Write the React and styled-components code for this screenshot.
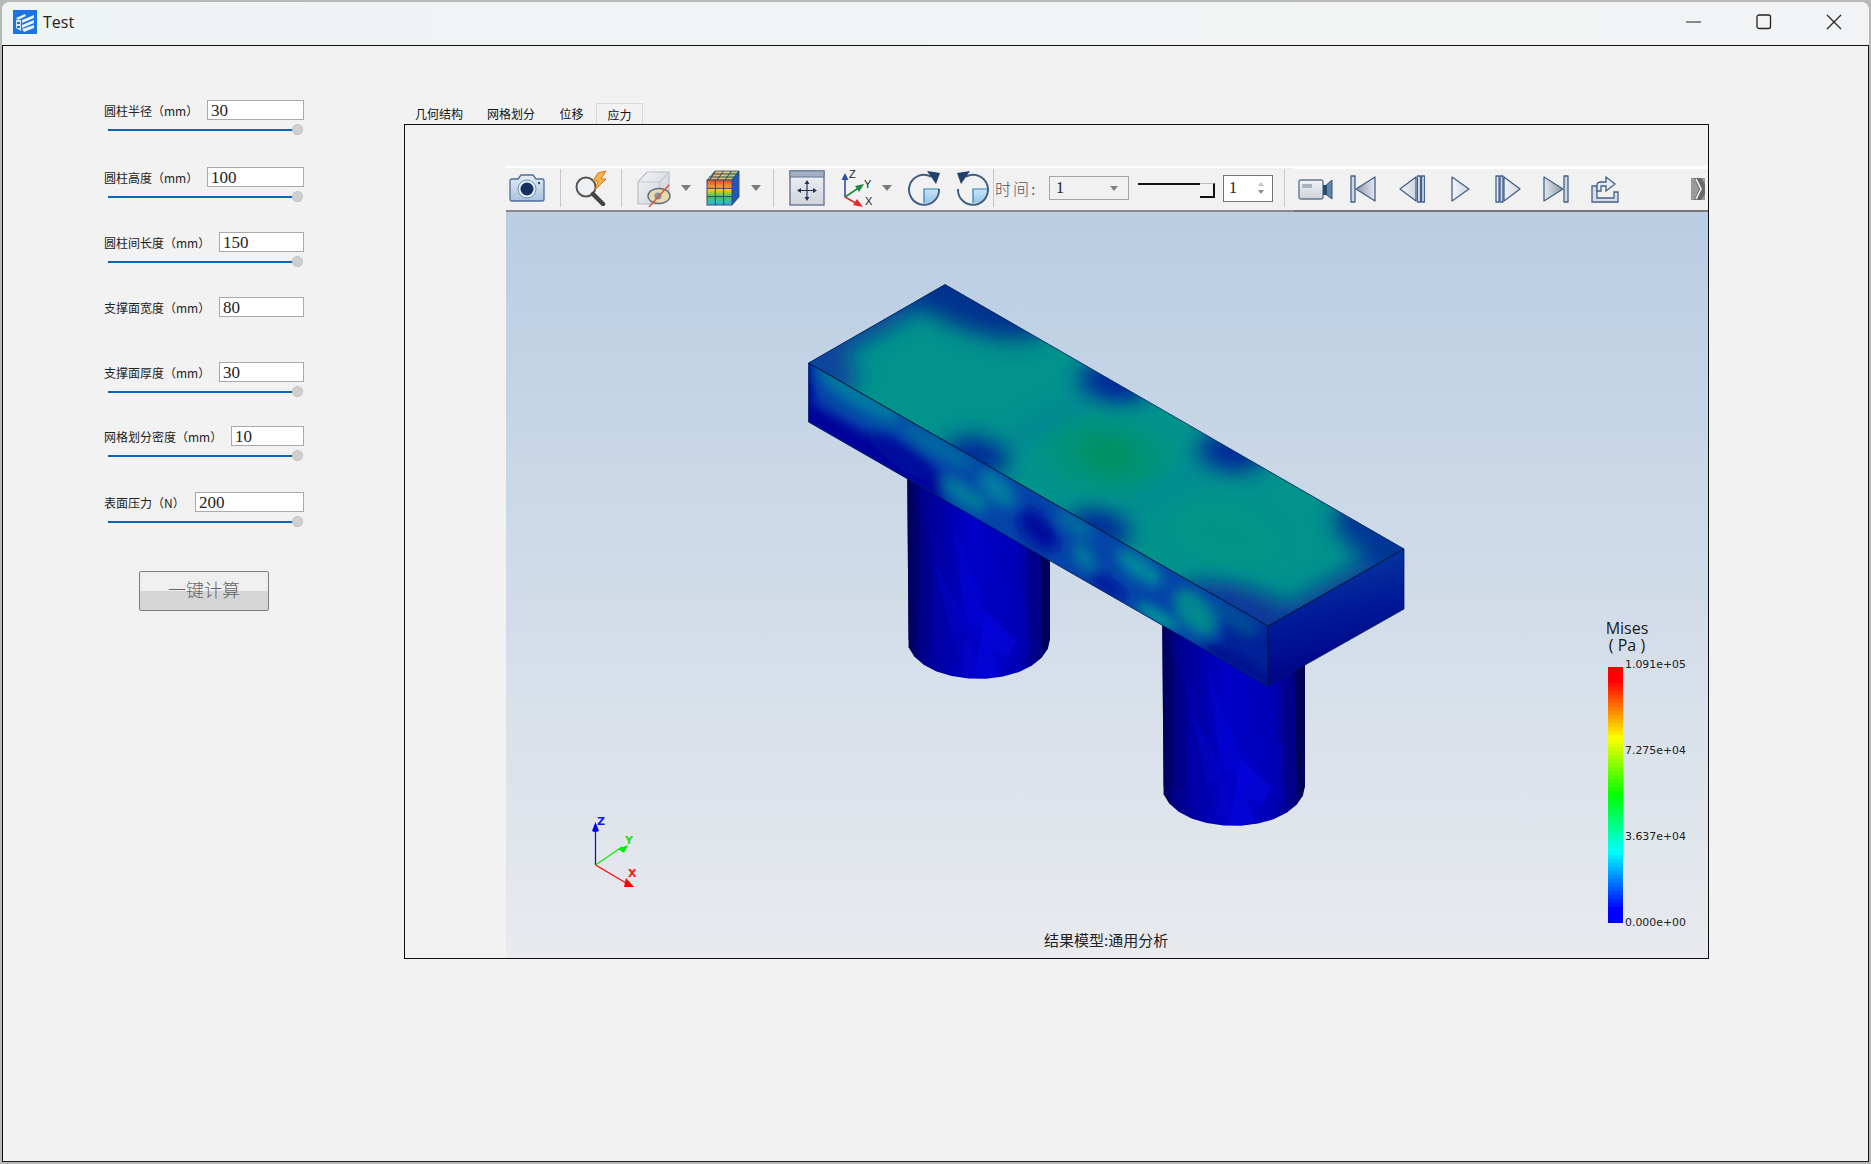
import React from "react";
import styled, { createGlobalStyle } from "styled-components";

const CJK = `"Noto Sans CJK SC", "Noto Sans", sans-serif`;
const SERIF = `"Liberation Serif", "Noto Sans CJK SC", serif`;

const GlobalStyle = createGlobalStyle`
  html, body {
    margin: 0;
    padding: 0;
    background: #b8b8b8;
  }
  * {
    box-sizing: border-box;
  }
`;

const Desktop = styled.div`
  width: 1871px;
  height: 1164px;
  padding: 2px 2px 2px 2px;
  overflow: hidden;
`;

const Win = styled.div`
  width: 1867px;
  height: 1160px;
  display: flex;
  flex-direction: column;
  border-radius: 8px 8px 0 0;
  overflow: hidden;
  background: #f2f2f2;
`;

const TitleBar = styled.div`
  height: 44px;
  flex: none;
  display: flex;
  align-items: center;
  padding: 0 0 3px 11px;
  background: linear-gradient(90deg, #eef3f3, #f1f4f4 50%, #f2f3f4);
  border-bottom: 1px solid #111;
`;

const AppTitle = styled.span`
  margin-left: 6px;
  font: 16px "Open Sans", sans-serif;
  color: #222;
`;

const WinButtons = styled.div`
  margin-left: auto;
  display: flex;
`;

const WinButton = styled.div`
  width: 70px;
  height: 40px;
  display: flex;
  align-items: center;
  justify-content: center;
`;

const Client = styled.div`
  flex: 1;
  display: flex;
  border-left: 1px solid #111;
  border-right: 1px solid #111;
  border-bottom: 1px solid #222;
`;

const Sidebar = styled.div`
  width: 400px;
  flex: none;
  padding: 54px 0 0 101px;
`;

const Field = styled.div`
  width: 200px;
  height: ${(p) => p.$h}px;
`;

const FieldRow = styled.div`
  display: flex;
  align-items: center;
  justify-content: space-between;
  height: 20px;
`;

const FieldLabel = styled.label`
  font: 12px ${CJK};
  color: #222;
  white-space: nowrap;
`;

const NumberInput = styled.input`
  width: ${(p) => p.$w}px;
  height: 20px;
  padding: 2px 3px 0;
  border: 1px solid #a9a9a9;
  background: #fff;
  color: #222;
  font: 17px ${SERIF};
  outline: none;
`;

const Slider = styled.div`
  display: flex;
  align-items: center;
  width: 195px;
  height: 11px;
  margin: 4px 0 0 4px;
`;

const SliderTrack = styled.div`
  flex: 1;
  height: 2px;
  background: #0b66bb;
`;

const SliderKnob = styled.div`
  width: 11px;
  height: 11px;
  border-radius: 50%;
  background: #cfcfcf;
  border: 1px dotted #b5b5b5;
`;

const CalcButton = styled.button`
  display: block;
  width: 130px;
  height: 40px;
  margin-left: 35px;
  padding: 0 0 4px;
  border: 1px solid #7f7f7f;
  border-radius: 2px;
  background: linear-gradient(#efefef 50%, #d5d5d5 50%);
  font: 300 18px ${SERIF};
  color: #666;
`;

const Main = styled.div`
  flex: 1;
  padding-top: 57px;
`;

const TabBar = styled.div`
  display: flex;
  height: 21px;
`;

const Tab = styled.div`
  width: ${(p) => p.$w}px;
  text-align: center;
  font: 12px/22px ${CJK};
  color: #111;
  white-space: nowrap;
  ${(p) => p.$active && "border: 1px solid #d9d9d9; border-bottom: 0;"}
`;

const TabPanel = styled.div`
  width: 1305px;
  height: 835px;
  margin-left: 1px;
  padding: 41px 0 0 101px;
  border: 1px solid #111;
`;

const ToolBar = styled.div`
  width: 1202px;
  height: 46px;
  padding-bottom: 2px;
  display: flex;
  align-items: center;
  background: #f1f1f1;
  border-top: 2px solid #fff;
  border-bottom: 2px solid #8a8a8a;
`;

const Sep = styled.div`
  flex: none;
  width: 1px;
  height: 38px;
  margin-left: ${(p) => p.$ml || 0}px;
  background: #c6c6c6;
`;

const Slot = styled.div`
  flex: none;
  width: ${(p) => p.$w || 40}px;
  margin-left: ${(p) => p.$ml || 0}px;
  display: flex;
  align-items: center;
  justify-content: center;
`;

const Caret = styled.div`
  flex: none;
  margin-left: ${(p) => p.$ml || 0}px;
  margin-right: 2px;
  width: 0;
  height: 0;
  border-left: 5px solid transparent;
  border-right: 5px solid transparent;
  border-top: 6px solid #7b7b7b;
`;

const TimeLabel = styled.span`
  flex: none;
  width: 46px;
  margin-left: 1px;
  font: 300 16px ${SERIF};
  letter-spacing: 2px;
  color: #555;
`;

const Combo = styled.div`
  flex: none;
  width: 80px;
  height: 24px;
  margin-left: 8px;
  padding: 0 10px 0 6px;
  display: flex;
  align-items: center;
  justify-content: space-between;
  border: 1px solid #a5a5a5;
  font: 16px ${SERIF};
  color: #222;
`;

const SmallCaret = styled.span`
  width: 0;
  height: 0;
  border-left: 4px solid transparent;
  border-right: 4px solid transparent;
  border-top: 5px solid #808080;
`;

const TimeSlider = styled.div`
  flex: none;
  width: 77px;
  height: 22px;
  margin: 12px 0 0 9px;
  display: flex;
  align-items: flex-start;
`;

const TimeTrack = styled.div`
  flex: 1;
  height: 2px;
  background: #111;
`;

const TimeThumb = styled.div`
  width: 15px;
  height: 15px;
  background: #f3f3f3;
  border-top: 1px solid #bbb;
  border-right: 2px solid #111;
  border-bottom: 2px solid #111;
`;

const Spin = styled.div`
  flex: none;
  width: 50px;
  height: 27px;
  margin-left: 8px;
  padding: 0 8px 0 5px;
  display: flex;
  align-items: center;
  justify-content: space-between;
  border: 1px solid #747474;
  background: #fff;
  font: 16px ${SERIF};
  color: #222;
`;

const SpinArrows = styled.div`
  display: flex;
  flex-direction: column;
  gap: 4px;
`;

const SpinArrow = styled.span`
  display: block;
  width: 0;
  height: 0;
  border-left: 3px solid transparent;
  border-right: 3px solid transparent;
  ${(p) => (p.$up ? "border-bottom: 4px solid #c4c4c4;" : "border-top: 4px solid #8c8c8c;")}
`;

const PlayerBar = styled.div`
  flex: 1;
  align-self: stretch;
  margin: -1px 0 -4px 9px;
  padding: 0 0 2px 2px;
  display: flex;
  align-items: center;
  background: #f1f1f1;
  border-top: 2px solid #fff;
  border-bottom: 2px solid #777;
`;

const Overflow = styled.div`
  margin-left: auto;
  margin-right: 3px;
  display: flex;
`;

const Viewport = styled.div`
  position: relative;
  width: 1202px;
  height: 746px;
  background: linear-gradient(#b9cde3, #e8eaee);
`;

const Scene = styled.svg`
  display: block;
`;

const Legend = styled.div`
  position: absolute;
  left: 1098px;
  top: 408px;
`;

const LegendTitle = styled.div`
  width: 46px;
  margin-bottom: 13px;
  text-align: center;
  font: 16px/17px "Open Sans", sans-serif;
  color: #1a1a1a;
`;

const LegendScale = styled.div`
  display: flex;
  height: 256px;
  padding-left: 4px;
`;

const LegendBar = styled.div`
  width: 15px;
  height: 256px;
  background: ${(p) => p.$bands};
`;

const LegendTicks = styled.div`
  height: 274px;
  margin: -10px 0 0 2px;
  display: flex;
  flex-direction: column;
  justify-content: space-between;
  font: 10.9px/16px "DejaVu Sans", sans-serif;
  color: #222;
`;

const Caption = styled.div`
  position: absolute;
  left: 538px;
  top: 718px;
  font: 15px/20px ${CJK};
  color: #222;
`;

const fields = [
  { label: "圆柱半径（mm）", value: "30", w: 97, h: 67, slider: true },
  { label: "圆柱高度（mm）", value: "100", w: 97, h: 65, slider: true },
  { label: "圆柱间长度（mm）", value: "150", w: 85, h: 65, slider: true },
  { label: "支撑面宽度（mm）", value: "80", w: 85, h: 65, slider: false },
  { label: "支撑面厚度（mm）", value: "30", w: 85, h: 64, slider: true },
  { label: "网格划分密度（mm）", value: "10", w: 73, h: 66, slider: true },
  { label: "表面压力（N）", value: "200", w: 109, h: 79, slider: true },
];

// stepped rainbow like the contour legend
const legendBands = () => {
  const n = 64;
  const stops = [];
  for (let i = 0; i < n; i++) {
    const hue = Math.min(240, Math.max(0, ((i - 3) / (n - 7)) * 240));
    const a = (i / n) * 100;
    const b = ((i + 1) / n) * 100;
    stops.push(`hsl(${hue} 100% 50%) ${a}% ${b}%`);
  }
  return `linear-gradient(${stops.join(",")})`;
};

const LogoIcon = () => (
  <svg width="24" height="24" viewBox="0 0 24 24">
    <rect width="24" height="24" fill="#1a73e8" />
    <path d="M3 8 12 4 13 6 5 10ZM9 10 21 5 21 8 9 13ZM9 15 21 10 21 13 9 18ZM9 19 21 15 21 18 11 22Z" fill="#fff" opacity=".9" />
    <path d="M3 10H8V21L3 18Z" fill="#d4e4fb" />
    <path d="M4 12H7V14H4ZM4 16H7V18H4Z" fill="#1a73e8" />
  </svg>
);

const CameraIcon = () => (
  <svg width="36" height="30" viewBox="0 0 36 30">
    <defs>
      <linearGradient id="camBody" x1="0" y1="0" x2="0" y2="1">
        <stop offset="0" stopColor="#e3edf7" />
        <stop offset="1" stopColor="#a9c3de" />
      </linearGradient>
    </defs>
    <path d="M3 6H9L12 2H24L27 6H33Q35 6 35 8V26Q35 28 33 28H3Q1 28 1 26V8Q1 6 3 6Z" fill="url(#camBody)" stroke="#4f6d96" strokeWidth="1.3" />
    <circle cx="18" cy="16" r="9" fill="#e6eef7" stroke="#6f8db2" />
    <circle cx="18" cy="16" r="6.5" fill="#14315f" />
    <circle cx="30" cy="10" r="1.2" fill="#2f4f7f" />
  </svg>
);

const SearchIcon = () => (
  <svg width="36" height="36" viewBox="0 0 36 36">
    <circle cx="13" cy="17" r="9.5" fill="#eef1f4" stroke="#555" strokeWidth="2" />
    <path d="M20 24 30 34" stroke="#444" strokeWidth="4.5" strokeLinecap="round" />
    <path d="M25 3 33 1 28 9 33 9 22 20 25 11 20 11Z" fill="#f4b24a" stroke="#d9781a" strokeWidth="1" />
  </svg>
);

const HideCubeIcon = () => (
  <svg width="36" height="38" viewBox="0 0 36 38">
    <defs>
      <linearGradient id="hideCube" x1="0" y1="0" x2="1" y2="1">
        <stop offset="0" stopColor="#f5f5f5" />
        <stop offset="1" stopColor="#c9ced6" />
      </linearGradient>
    </defs>
    <path d="M2 13 11 3H33V25L24 35H2Z" fill="url(#hideCube)" stroke="#b9c0ca" strokeWidth="1.2" />
    <path d="M2 13H24V35M24 13 33 3" fill="none" stroke="#c3c9d2" strokeWidth="1.2" />
    <ellipse cx="23" cy="27" rx="11" ry="7.5" fill="#e7dcae" stroke="#5f7186" strokeWidth="1.4" />
    <circle cx="22" cy="27" r="3.6" fill="#8494a8" />
    <path d="M13 38 33 16" stroke="#d9552c" strokeWidth="1.4" />
  </svg>
);

const ColorCubeIcon = () => (
  <svg width="34" height="36" viewBox="0 0 34 36">
    <defs>
      <linearGradient id="rainbowFront" x1="0" y1="0" x2="0" y2="1">
        <stop offset="0" stopColor="#e8482c" />
        <stop offset=".4" stopColor="#f2c62a" />
        <stop offset=".65" stopColor="#43c95a" />
        <stop offset="1" stopColor="#2fb2e8" />
      </linearGradient>
      <linearGradient id="rainbowTop" x1="0" y1="0" x2="1" y2="0">
        <stop offset="0" stopColor="#f0a060" />
        <stop offset=".5" stopColor="#e8c868" />
        <stop offset="1" stopColor="#90c878" />
      </linearGradient>
    </defs>
    <path d="M1 10 9 1H33L26 10Z" fill="url(#rainbowTop)" stroke="#38526f" strokeWidth=".8" />
    <path d="M26 10 33 1V27L26 35Z" fill="#2358b8" stroke="#1e3f7f" strokeWidth=".8" />
    <rect x="1" y="10" width="25" height="25" fill="url(#rainbowFront)" stroke="#38526f" />
    <path d="M9.3 10V35M17.6 10V35M1 18.3H26M1 26.6H26M9.5 1 3.6 10M17.5 1 11 10M25.5 1 19 10M3.5 7H29M6.5 4H31.5" stroke="#2e4868" strokeWidth="1" fill="none" />
  </svg>
);

const FitIcon = () => (
  <svg width="36" height="36" viewBox="0 0 36 36">
    <defs>
      <linearGradient id="fitBody" x1="0" y1="0" x2="0" y2="1">
        <stop offset="0" stopColor="#f0f2f5" />
        <stop offset="1" stopColor="#cfd4dc" />
      </linearGradient>
    </defs>
    <rect x="1" y="1" width="34" height="34" fill="url(#fitBody)" stroke="#64768f" strokeWidth="1.4" />
    <rect x="1" y="1" width="34" height="6" fill="#a3b0c2" stroke="#64768f" />
    <path d="M18 12V29M10 20.5H26" stroke="#24344f" strokeWidth="1.2" />
    <path d="M18 10 15.5 14H20.5ZM18 31 15.5 27H20.5ZM8 20.5 12 18V23ZM28 20.5 24 18V23Z" fill="#24344f" />
  </svg>
);

const AxesIcon = () => (
  <svg width="42" height="38" viewBox="0 0 42 38">
    <path d="M7 28V9" stroke="#2d4fa8" strokeWidth="1.6" />
    <path d="M7 4 3.5 11H10.5Z" fill="#2d4fa8" />
    <path d="M7 28 22 18" stroke="#1c8a3c" strokeWidth="1.6" />
    <path d="M26 15 17 17 21 23Z" fill="#1c8a3c" />
    <path d="M7 28 21 36" stroke="#e02a2a" strokeWidth="1.6" />
    <path d="M25 38 15 36 19 30Z" fill="#e02a2a" />
    <text x="11" y="9" fontFamily="Liberation Sans, sans-serif" fontSize="11" fill="#222">Z</text>
    <text x="26" y="19" fontFamily="Liberation Sans, sans-serif" fontSize="11" fill="#222">Y</text>
    <text x="27" y="36" fontFamily="Liberation Sans, sans-serif" fontSize="11" fill="#222">X</text>
  </svg>
);

const RotateIcon = ({ flip, id }) => (
  <svg width="34" height="36" viewBox="0 0 34 36" style={flip ? { transform: "scaleX(-1)" } : undefined}>
    <defs>
      <linearGradient id={id} x1="0" y1="0" x2="0" y2="1">
        <stop offset="0" stopColor="#cfe6f6" />
        <stop offset="1" stopColor="#8fc4e8" />
      </linearGradient>
    </defs>
    <path d="M17 19H32A15 15 0 0 1 17 33Z" fill={flip ? "none" : `url(#${id})`} />
    <path d="M17 19H2A15 15 0 0 0 17 33Z" fill={flip ? `url(#${id})` : "none"} />
    <path d="M24 6.5A15 15 0 1 0 32 19" fill="none" stroke="#3f5f82" strokeWidth="2" />
    <path d={flip ? "M2 19H17V33" : "M17 33V19H32"} stroke="#2c7fb8" strokeWidth="1.2" fill="none" />
    <path d="M20 1 33 3 29 14Z" fill="#1f3f6c" />
  </svg>
);

const VideoIcon = () => (
  <svg width="36" height="24" viewBox="0 0 36 24">
    <defs>
      <linearGradient id="videoBody" x1="0" y1="0" x2="0" y2="1">
        <stop offset="0" stopColor="#f2f4f7" />
        <stop offset="1" stopColor="#cdd3dc" />
      </linearGradient>
    </defs>
    <rect x="1" y="3" width="24" height="19" rx="2" fill="url(#videoBody)" stroke="#64788f" strokeWidth="1.4" />
    <rect x="4" y="7" width="10" height="4" fill="#a9b2be" />
    <path d="M26 10 34 3V22L26 16Z" fill="#5f86a8" stroke="#3a5878" />
    <rect x="25" y="8" width="4" height="10" fill="#2c4a6a" />
  </svg>
);

const TransportDefs = () => (
  <svg width="0" height="0" style={{ position: "absolute" }}>
    <defs>
      <linearGradient id="darkTri" x1="0" y1="0" x2="1" y2="0">
        <stop offset="0" stopColor="#8e99a8" />
        <stop offset="1" stopColor="#e4e8ee" />
      </linearGradient>
      <linearGradient id="darkTriR" x1="0" y1="0" x2="1" y2="0">
        <stop offset="0" stopColor="#e4e8ee" />
        <stop offset="1" stopColor="#8e99a8" />
      </linearGradient>
      <linearGradient id="lightTri" x1="0" y1="0" x2="1" y2="0">
        <stop offset="0" stopColor="#f3f5f8" />
        <stop offset="1" stopColor="#cfd6e0" />
      </linearGradient>
    </defs>
  </svg>
);

const Transport = ({ children }) => (
  <svg width="26" height="28" viewBox="0 0 26 28" fill="none" stroke="#42618c" strokeWidth="1.3" strokeLinejoin="round">
    {children}
  </svg>
);

const ExportIcon = () => (
  <svg width="30" height="30" viewBox="0 0 30 30" fill="none">
    <path d="M3 12H8V24H25V18H29V28H3Z" fill="#d7dde6" stroke="#42618c" strokeWidth="1.3" />
    <path d="M8 17V11Q8 8 12 8H17V3L26 10 17 17V12H12V17Z" fill="#e8ecf1" stroke="#42618c" strokeWidth="1.3" />
  </svg>
);

const OverflowIcon = () => (
  <svg width="14" height="22" viewBox="0 0 14 22">
    <rect width="14" height="22" fill="#6a6a6a" />
    <path d="M0 0H3L8 11 3 22H0ZM10 0H14V6ZM10 22H14V16Z" fill="#9a9a9a" />
    <path d="M5 1 10 11 5 21" fill="none" stroke="#f1f1f1" strokeWidth="1.6" />
  </svg>
);

// the rim is a polyline, the mesh is coarse in the picture
const rimPath = () => {
  const cx = 978.5;
  const cy = 639;
  const pts = [];
  for (let a = 0; a <= 180; a += 14) {
    const r = (a * Math.PI) / 180;
    pts.push(`${(cx + 71.5 * Math.cos(r)).toFixed(1)} ${(cy + 40 * Math.sin(r)).toFixed(1)}`);
  }
  return `M907 445 L1050 515 L${pts.join(" L")}Z`;
};

const postFacets = [
  ["907,470 920,520 918,640 907,640", "#000064", 0.8],
  ["920,500 934,560 930,650 918,640", "#000088", 0.8],
  ["930,520 952,590 962,668 932,655", "#0000a8", 0.7],
  ["934,560 966,620 980,678 960,668", "#0404cc", 0.5],
  ["952,520 985,610 1000,640 966,620", "#0606dc", 0.4],
  ["985,610 1016,640 1000,676 975,678", "#0606e4", 0.55],
  ["1000,540 1026,600 1030,660 1016,640", "#0000b8", 0.6],
  ["1026,530 1040,540 1042,650 1030,662", "#00008c", 0.8],
  ["1040,520 1050,520 1050,640 1042,650", "#000058", 0.85],
  ["940,640 970,630 960,668", "#0000b4", 0.5],
  ["990,650 1018,660 1000,676", "#0000ba", 0.5],
];

const Post = ({ dx, dy, id }) => {
  const d = rimPath();
  return (
    <g transform={`translate(${dx} ${dy})`}>
      <clipPath id={id}>
        <path d={d} />
      </clipPath>
      <path d={d} fill="url(#postShade)" />
      <g clipPath={`url(#${id})`}>
        {postFacets.map(([points, fill, opacity]) => (
          <polygon key={points} points={points} fill={fill} opacity={opacity} />
        ))}
      </g>
    </g>
  );
};

const Triad = () => (
  <g>
    <path d="M595.5 865V831" stroke="#0000ff" strokeWidth="1.2" />
    <path d="M595.5 822 599 831 Q595 833 592 831Z" fill="#0000ff" />
    <path d="M595.5 865 622 847" stroke="#00ee00" strokeWidth="1.2" />
    <path d="M628 845 624 853 618 849Z" fill="#00ee00" />
    <path d="M595.5 865 626 883" stroke="#ff0000" strokeWidth="1.2" />
    <path d="M634 887 624 887 626 878Z" fill="#ff0000" />
    <text x="597" y="825" fontFamily="DejaVu Sans, sans-serif" fontWeight="700" fontSize="11" fill="#1414ff">Z</text>
    <text x="625" y="844" fontFamily="DejaVu Sans, sans-serif" fontWeight="700" fontSize="11" fill="#1fe01f">Y</text>
    <text x="628" y="877" fontFamily="DejaVu Sans, sans-serif" fontWeight="700" fontSize="11" fill="#ff1414">X</text>
  </g>
);

const Model = () => (
  <Scene width="1202" height="746" viewBox="506 212 1202 746">
    <defs>
      <linearGradient id="postShade" x1="0" y1="0" x2="1" y2="0">
        <stop offset="0" stopColor="#00004e" />
        <stop offset=".1" stopColor="#00008c" />
        <stop offset=".45" stopColor="#0000c8" />
        <stop offset=".78" stopColor="#0000b8" />
        <stop offset=".92" stopColor="#000080" />
        <stop offset="1" stopColor="#00004e" />
      </linearGradient>
      <linearGradient id="endShade" x1="0" y1="0" x2=".25" y2="1">
        <stop offset="0" stopColor="#0a46a2" />
        <stop offset=".55" stopColor="#001a98" />
        <stop offset="1" stopColor="#000084" />
      </linearGradient>
      <clipPath id="topClip">
        <polygon points="808.6,363 945,284.5 1404,549 1268,626" />
      </clipPath>
      <clipPath id="frontClip">
        <polygon points="808.6,363 1268,626 1268,686 808.6,422" />
      </clipPath>
      <filter id="soft" x="-20%" y="-20%" width="140%" height="140%">
        <feGaussianBlur stdDeviation="11" />
      </filter>
      <filter id="softer" x="-20%" y="-20%" width="140%" height="140%">
        <feGaussianBlur stdDeviation="6" />
      </filter>
    </defs>

    <Post dx={0} dy={0} id="postA" />
    <Post dx={255} dy={147} id="postB" />

    <g clipPath="url(#topClip)">
      <rect x="780" y="260" width="650" height="390" fill="#01938c" />
      <g filter="url(#soft)">
        <g transform="matrix(4.594 2.63 1.364 -.785 808.6 363)">
          <rect x="-12" y="-20" width="14" height="140" fill="#07409a" />
          <rect x="98" y="-20" width="14" height="140" fill="#07409a" />
          <ellipse cx="4" cy="104" rx="16" ry="28" fill="#00308e" />
          <ellipse cx="98" cy="106" rx="13" ry="26" fill="#043594" />
          <ellipse cx="97" cy="-6" rx="14" ry="26" fill="#07389a" />
          <ellipse cx="0" cy="-4" rx="10" ry="22" fill="#07449c" />
          <ellipse cx="37" cy="100" rx="6" ry="18" fill="#00289a" />
          <ellipse cx="36" cy="2" rx="5.5" ry="16" fill="#00289a" />
          <ellipse cx="63" cy="98" rx="5.5" ry="18" fill="#00289a" />
          <ellipse cx="63" cy="1" rx="5.5" ry="15" fill="#00289a" />
          <ellipse cx="37" cy="50" rx="1.8" ry="36" fill="#03789a" opacity=".6" />
          <ellipse cx="63" cy="50" rx="1.8" ry="36" fill="#037f9a" opacity=".55" />
          <ellipse cx="50" cy="51" rx="10" ry="28" fill="#03936e" opacity=".7" />
          <ellipse cx="50" cy="51" rx="4.5" ry="11" fill="#06905a" />
          <ellipse cx="78" cy="42" rx="9" ry="20" fill="#02977f" opacity=".7" />
        </g>
      </g>
    </g>

    <g clipPath="url(#frontClip)">
      <rect x="800" y="355" width="480" height="340" fill="#0444a8" />
      <g filter="url(#softer)">
        <g transform="matrix(4.594 2.63 0 .59 808.6 363)">
          <rect x="-4" y="65" width="34" height="45" fill="#00009a" />
          <rect x="-4" y="-5" width="5" height="110" fill="#0000a0" />
          <rect x="90" y="-5" width="16" height="110" fill="#002098" />
          <rect x="86" y="80" width="18" height="30" fill="#00108c" />
          <ellipse cx="11" cy="5" rx="9" ry="26" fill="#0378a0" />
          <ellipse cx="21" cy="66" rx="8" ry="24" fill="#000c9c" />
          <ellipse cx="28" cy="16" rx="8" ry="18" fill="#046ea0" opacity=".85" />
          <ellipse cx="34" cy="72" rx="5" ry="20" fill="#04889a" opacity=".8" />
          <ellipse cx="41" cy="30" rx="4" ry="26" fill="#0485a0" opacity=".85" />
          <ellipse cx="50" cy="60" rx="4.5" ry="30" fill="#000c9e" />
          <ellipse cx="58" cy="16" rx="4" ry="18" fill="#0370a0" opacity=".9" />
          <ellipse cx="60" cy="62" rx="2.5" ry="20" fill="#03809c" opacity=".85" />
          <ellipse cx="65" cy="88" rx="4" ry="13" fill="#000c9c" />
          <ellipse cx="72" cy="26" rx="5" ry="22" fill="#04909a" opacity=".85" />
          <ellipse cx="76" cy="92" rx="4.5" ry="12" fill="#04a094" />
          <ellipse cx="84" cy="48" rx="4.5" ry="34" fill="#04888f" />
          <ellipse cx="93" cy="18" rx="5" ry="18" fill="#055a9a" opacity=".8" />
        </g>
      </g>
    </g>

    <polygon points="1268,626 1404,549 1404,609 1268,686" fill="url(#endShade)" />
    <path d="M808.6 363 945 284.5 1404 549 1404 609 1268 686 808.6 422Z" fill="none" stroke="#001a5a" strokeWidth=".8" />
    <path d="M808.6 363 1268 626 1404 549M1268 626V686" fill="none" stroke="#04102e" strokeWidth="1" />

    <Triad />
  </Scene>
);

export default function App() {
  return (
    <Desktop>
      <GlobalStyle />
      <TransportDefs />
      <Win>
        <TitleBar>
          <LogoIcon />
          <AppTitle>Test</AppTitle>
          <WinButtons>
            <WinButton>
              <svg width="16" height="16" viewBox="0 0 16 16"><path d="M0 8H15" stroke="#222" strokeWidth="1" /></svg>
            </WinButton>
            <WinButton>
              <svg width="16" height="16" viewBox="0 0 16 16"><rect x="1" y="1" width="13.5" height="13.5" rx="2" fill="none" stroke="#222" strokeWidth="1.3" /></svg>
            </WinButton>
            <WinButton>
              <svg width="16" height="16" viewBox="0 0 16 16"><path d="M1 1 15 15M15 1 1 15" stroke="#222" strokeWidth="1.2" /></svg>
            </WinButton>
          </WinButtons>
        </TitleBar>
        <Client>
          <Sidebar>
            {fields.map((f) => (
              <Field key={f.label} $h={f.h}>
                <FieldRow>
                  <FieldLabel>{f.label}</FieldLabel>
                  <NumberInput $w={f.w} defaultValue={f.value} />
                </FieldRow>
                {f.slider && (
                  <Slider>
                    <SliderTrack />
                    <SliderKnob />
                  </Slider>
                )}
              </Field>
            ))}
            <CalcButton>一键计算</CalcButton>
          </Sidebar>
          <Main>
            <TabBar>
              <Tab $w={72}>几何结构</Tab>
              <Tab $w={72}>网格划分</Tab>
              <Tab $w={49}>位移</Tab>
              <Tab $w={47} $active>应力</Tab>
            </TabBar>
            <TabPanel>
              <ToolBar>
                <Slot $w={42}><CameraIcon /></Slot>
                <Sep $ml={12} />
                <Slot $w={60}><SearchIcon /></Slot>
                <Sep />
                <Slot $ml={12}><HideCubeIcon /></Slot>
                <Caret $ml={7} />
                <Slot $ml={10}><ColorCubeIcon /></Slot>
                <Caret $ml={8} />
                <Sep $ml={10} />
                <Slot $ml={13}><FitIcon /></Slot>
                <Slot $w={44} $ml={10}><AxesIcon /></Slot>
                <Caret $ml={1} />
                <Slot $ml={10}><RotateIcon id="rotA" /></Slot>
                <Slot $ml={9}><RotateIcon flip id="rotB" /></Slot>
                <Sep $ml={0} />
                <TimeLabel>时间:</TimeLabel>
                <Combo>
                  1
                  <SmallCaret />
                </Combo>
                <TimeSlider>
                  <TimeTrack />
                  <TimeThumb />
                </TimeSlider>
                <Spin>
                  1
                  <SpinArrows>
                    <SpinArrow $up />
                    <SpinArrow />
                  </SpinArrows>
                </Spin>
                <Sep $ml={11} />
                <PlayerBar>
                  <Slot><VideoIcon /></Slot>
                  <Slot $ml={7}>
                    <Transport>
                      <rect x="1" y="1" width="4" height="26" fill="#cfd6e0" />
                      <path d="M25 2V26L6 14Z" fill="url(#darkTri)" />
                    </Transport>
                  </Slot>
                  <Slot $ml={9}>
                    <Transport>
                      <path d="M17 2V26L1 14Z" fill="url(#lightTri)" />
                      <rect x="18.5" y="1" width="3" height="26" fill="#e8ecf1" />
                      <rect x="22.5" y="1" width="3" height="26" fill="#cfd6e0" />
                    </Transport>
                  </Slot>
                  <Slot $ml={8}>
                    <Transport>
                      <path d="M5 2V26L22 14Z" fill="url(#lightTri)" />
                    </Transport>
                  </Slot>
                  <Slot $ml={8}>
                    <Transport>
                      <rect x="1" y="1" width="3" height="26" fill="#e8ecf1" />
                      <rect x="5" y="1" width="3" height="26" fill="#cfd6e0" />
                      <path d="M9 2V26L25 14Z" fill="url(#lightTri)" />
                    </Transport>
                  </Slot>
                  <Slot $ml={8}>
                    <Transport>
                      <path d="M1 2V26L20 14Z" fill="url(#darkTriR)" />
                      <rect x="21" y="1" width="4" height="26" fill="#cfd6e0" />
                    </Transport>
                  </Slot>
                  <Slot $ml={8}><ExportIcon /></Slot>
                  <Overflow><OverflowIcon /></Overflow>
                </PlayerBar>
              </ToolBar>
              <Viewport>
                <Model />
                <Legend>
                  <LegendTitle>
                    Mises
                    <br />( Pa )
                  </LegendTitle>
                  <LegendScale>
                    <LegendBar $bands={legendBands()} />
                    <LegendTicks>
                      <span>1.091e+05</span>
                      <span>7.275e+04</span>
                      <span>3.637e+04</span>
                      <span>0.000e+00</span>
                    </LegendTicks>
                  </LegendScale>
                </Legend>
                <Caption>结果模型:通用分析</Caption>
              </Viewport>
            </TabPanel>
          </Main>
        </Client>
      </Win>
    </Desktop>
  );
}
